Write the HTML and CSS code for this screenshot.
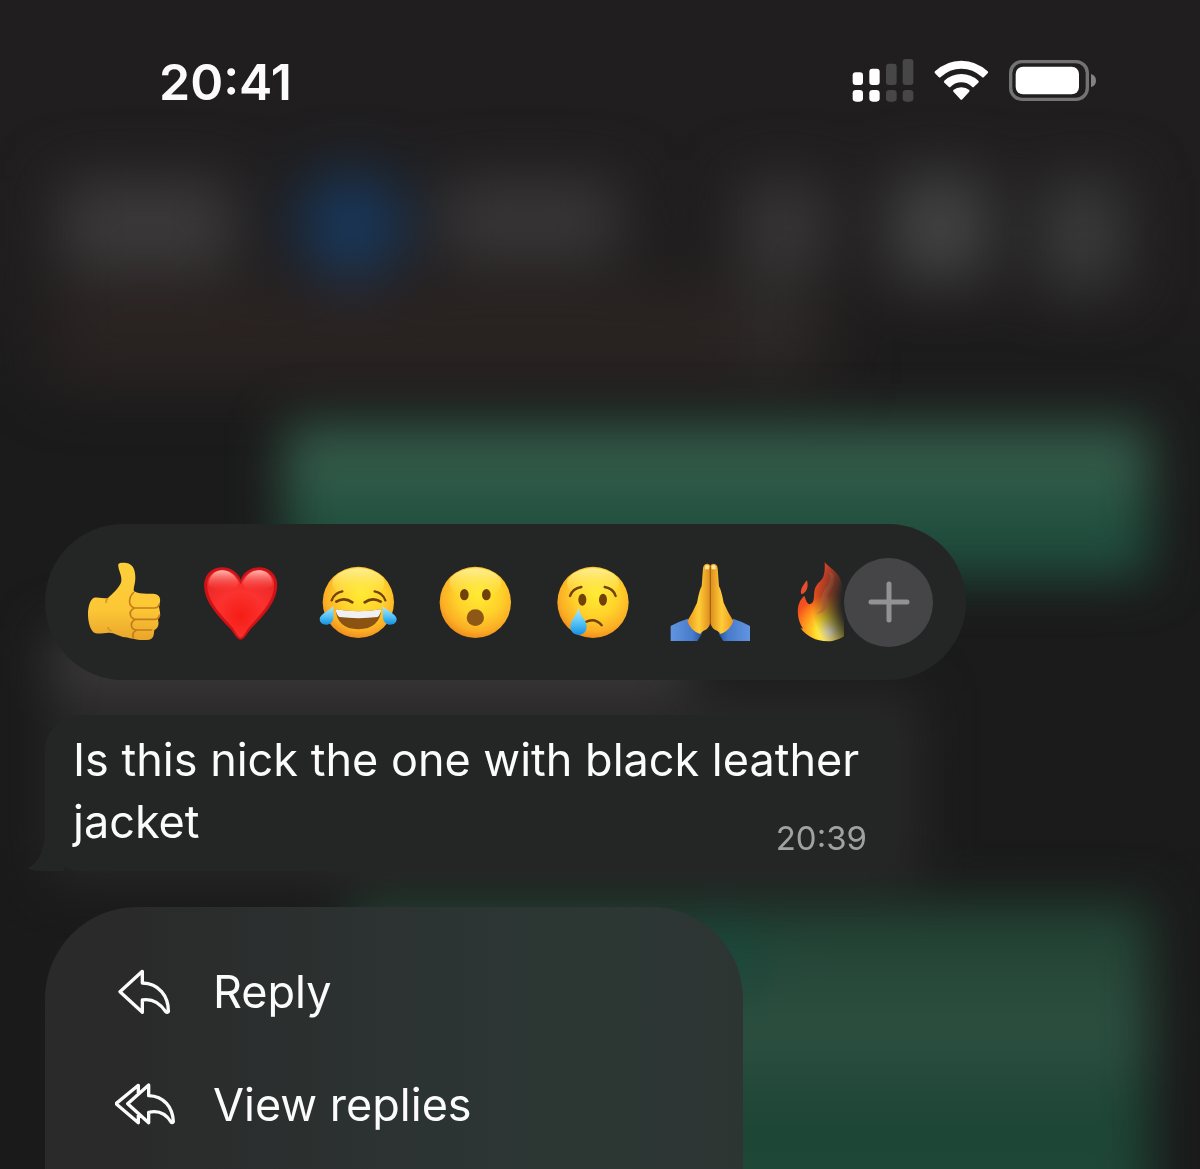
FILE: index.html
```html
<!DOCTYPE html>
<html lang="en">
<head>
<meta charset="utf-8">
<meta name="viewport" content="width=device-width, initial-scale=1">
<title>Message actions</title>
<link rel="stylesheet" href="styles.css">
</head>
<body>
<svg class="backdrop" viewBox="0 0 1200 1169" preserveAspectRatio="none" aria-hidden="true">
  <defs>
    <filter id="soft" x="-20%" y="-50%" width="140%" height="200%" color-interpolation-filters="sRGB"><feGaussianBlur stdDeviation="30"/></filter>
    <filter id="tight" x="-20%" y="-50%" width="140%" height="200%" color-interpolation-filters="sRGB"><feGaussianBlur stdDeviation="25"/></filter>
    <linearGradient id="sent1" x1="0" y1="0" x2="0" y2="1">
      <stop offset="0" stop-color="#2f5344"/><stop offset=".35" stop-color="#345d4b"/><stop offset=".6" stop-color="#214f3e"/><stop offset="1" stop-color="#1f4d3f"/>
    </linearGradient>
    <linearGradient id="sent2" x1="0" y1="0" x2="0" y2="1">
      <stop offset="0" stop-color="#203f31"/><stop offset=".4" stop-color="#2d5041"/><stop offset=".65" stop-color="#1d4536"/><stop offset="1" stop-color="#214a3a"/>
    </linearGradient>
    <linearGradient id="base" x1="0" y1="0" x2="0" y2="1">
      <stop offset="0" stop-color="#201e1f"/><stop offset=".25" stop-color="#1f1d1e"/><stop offset=".36" stop-color="#1b1b1b"/><stop offset="1" stop-color="#1a1a1a"/>
    </linearGradient>
  </defs>
  <rect width="1200" height="1169" fill="url(#base)"/>
  <g filter="url(#soft)">
    <rect x="50" y="280" width="780" height="105" fill="#2a2322"/>
    <rect x="740" y="230" width="65" height="140" fill="#2c2a29"/>
    <rect x="60" y="180" width="175" height="90" fill="#3c3a3b"/>
    <rect x="440" y="180" width="180" height="80" fill="#393738"/>
    <rect x="740" y="180" width="90" height="90" fill="#383637"/>
    <rect x="890" y="175" width="100" height="105" fill="#434343"/>
    <rect x="1040" y="180" width="85" height="110" fill="#3b3b3b"/>
    <circle cx="352" cy="225" r="54" fill="#18385c"/>
  </g>
  <g filter="url(#tight)">
    <rect x="284" y="422" width="866" height="156" fill="url(#sent1)"/>
    <rect x="50" y="630" width="640" height="80" fill="#3b393a"/>
    <rect x="50" y="690" width="870" height="190" fill="#292828"/>
    <rect x="350" y="902" width="800" height="330" fill="url(#sent2)"/>
    <ellipse cx="720" cy="960" rx="50" ry="40" fill="#1c473b"/>
  </g>
</svg>

<div class="screen">
  <header class="status">
    <time class="clock">20:41</time>
    <div class="indicators">
      <svg width="62" height="44" viewBox="36 54 186 132" role="img" aria-label="Signal">
        <g fill="#fff"><rect x="38" y="97" width="31" height="38" rx="9"/><rect x="88" y="86" width="31" height="49" rx="9"/><rect x="38" y="150" width="31" height="35" rx="10"/><rect x="88" y="150" width="31" height="35" rx="10"/></g>
        <g fill="#484748"><rect x="138" y="71" width="32" height="64" rx="9"/><rect x="188" y="57" width="32" height="78" rx="9"/><rect x="138" y="150" width="32" height="35" rx="10"/><rect x="188" y="150" width="32" height="35" rx="10"/></g>
      </svg>
      <svg width="55" height="44" viewBox="282 54 165 132" role="img" aria-label="Wi-Fi">
        <g fill="#fff"><path d="M285 94Q319 62 364 62Q409 62 443 94Q446 97 443 100L432 111Q429 114 426 111Q399 86 364 86Q329 86 302 111Q299 114 296 111L285 100Q282 97 285 94Z"/><path d="M313 122Q335 102 364 102Q393 102 415 122Q418 125 415 128L402 140Q399 143 396 140Q382 127 364 127Q346 127 332 140Q329 143 326 140L313 128Q310 125 313 122Z"/><path d="M340 150Q350 142 364 142Q378 142 388 150Q390 153 387 156L367 178Q364 181 361 178L341 156Q338 153 340 150Z"/></g>
      </svg>
      <svg width="88" height="44" viewBox="507 54 264 132" role="img" aria-label="Battery">
        <rect x="512" y="65" width="230" height="113" rx="34" fill="none" stroke="#747374" stroke-width="10"/>
        <rect x="527" y="80" width="190" height="83" rx="22" fill="#fff"/><path d="M753 102Q768 107 768 122Q768 137 753 141Z" fill="#848384"/>
      </svg>
    </div>
  </header>

  <main class="focus">
    <section class="reactions" aria-label="Reactions">
      <div class="strip">
        <button class="reaction" type="button" aria-label="Thumbs up">
          <svg viewBox="35 30 252 252">
            <defs><linearGradient id="hand" x1="0" y1="0" x2="0" y2="1"><stop offset="0" stop-color="#ffd03a"/><stop offset=".6" stop-color="#fcc736"/><stop offset="1" stop-color="#e9a52b"/></linearGradient></defs>
            <path d="M144 47C141 37 158 37 168 39C188 42 195 60 195 83C195 103 188 113 191 124C206 132 222 132 247 131C266 131 273 144 268 160C264 168 267 175 269 187C271 200 264 204 263 209C267 225 263 234 252 240C250 254 252 269 229 270C198 272 182 264 165 262C145 259 131 247 115 248C102 248 90 252 76 250C61 246 53 218 53 193C53 166 61 147 71 143C84 141 96 145 112 145C128 130 152 108 153 93C155 76 144 60 144 47Z" fill="url(#hand)"/>
            <path d="M191 126Q176 140 178 158Q180 170 192 174Q174 184 182 200Q186 207 195 208Q178 218 185 233Q190 240 199 240Q182 248 190 264M190 174H252Q264 174 267 162M192 208H255Q266 206 268 194M196 240H246" fill="none" stroke="#c47d18" stroke-width="5"/>
            <path d="M112 145Q105 152 108 159M124 243Q113 240 113 231" fill="none" stroke="#d8962a" stroke-width="5"/>
          </svg>
        </button>
        <button class="reaction" type="button" aria-label="Heart">
          <svg viewBox="385 30 252 252">
            <defs><radialGradient id="heart" cx=".5" cy=".68" r=".6"><stop offset="0" stop-color="#f51d15"/><stop offset=".6" stop-color="#fb322f"/><stop offset="1" stop-color="#ee2a29"/></radialGradient>
            <linearGradient id="gloss" x1="0" y1="0" x2="0" y2="1"><stop offset="0" stop-color="#ffb9b2"/><stop offset="1" stop-color="#ff4a46" stop-opacity="0"/></linearGradient></defs>
            <path d="M510 89C529 40 603 38 618 91C629 150 573 202 541 236C531 247 521 268 510 269C498 268 489 247 479 236C447 202 391 150 402 91C417 38 491 40 510 89Z" fill="#d01216"/>
            <path d="M510 103C529 48 594 46 609 91C619 148 566 197 536 230C526 242 519 261 510 263C500 261 494 242 484 230C454 197 401 148 411 91C426 46 491 48 510 103Z" fill="url(#heart)"/>
            <path d="M413 105C416 47 485 47 504 99Q500 120 460 122Q430 123 413 105ZM607 105C604 47 535 47 516 99Q520 120 560 122Q590 123 607 105Z" fill="url(#gloss)"/>
          </svg>
        </button>
        <button class="reaction" type="button" aria-label="Tears of joy">
          <svg viewBox="46 30 252 252">
            <defs>
              <radialGradient id="face" cx=".55" cy=".38" r=".64"><stop offset="0" stop-color="#ffec32"/><stop offset=".5" stop-color="#ffd12a"/><stop offset=".82" stop-color="#fbae25"/><stop offset="1" stop-color="#ee8a1c"/></radialGradient>
              <linearGradient id="shine" x1="0" y1="0" x2="0" y2="1"><stop offset="0" stop-color="#fff2a0" stop-opacity=".9"/><stop offset="1" stop-color="#ffe93b" stop-opacity="0"/></linearGradient>
              <linearGradient id="tear" x1="0" y1="0" x2="0" y2="1"><stop offset="0" stop-color="#b5ecff"/><stop offset=".55" stop-color="#55c5f8"/><stop offset="1" stop-color="#1690df"/></linearGradient>
            </defs>
            <circle cx="173" cy="157" r="107" fill="url(#face)"/><ellipse cx="173" cy="100" rx="78" ry="45" fill="url(#shine)"/>
            <g fill="none" stroke="#70410a" stroke-linecap="round" stroke-width="8"><path d="M93 151Q101 128 125 124M254 151Q246 128 222 124" stroke-width="7"/><path d="M107 155Q131 140 155 157M192 157Q216 140 240 155"/></g>
            <path d="M105 178Q173 190 242 178Q237 237 173 238Q109 237 105 178Z" fill="#8a5312"/>
            <path d="M105 178Q173 190 242 178Q239 195 231 201Q173 208 116 201Q107 195 105 178Z" fill="#f0f0f2"/>
            <path d="M98 167C90 181 57 191 57 207C57 230 96 231 98 203ZM246 167C254 181 288 191 288 207C288 230 249 231 247 203Z" fill="url(#tear)"/>
          </svg>
        </button>
        <button class="reaction" type="button" aria-label="Surprised">
          <svg viewBox="397 30 252 252">
            <circle cx="524" cy="157" r="107" fill="url(#face)"/><ellipse cx="524" cy="100" rx="78" ry="45" fill="url(#shine)"/>
            <g fill="#70410a"><ellipse cx="491" cy="134" rx="13" ry="17"/><ellipse cx="557" cy="134" rx="13" ry="17"/></g><ellipse cx="524" cy="203" rx="26" ry="25" fill="#8e5716"/>
          </svg>
        </button>
        <button class="reaction" type="button" aria-label="Crying">
          <svg viewBox="28 30 252 252">
            <circle cx="157" cy="157" r="107" fill="url(#face)"/><ellipse cx="157" cy="100" rx="78" ry="45" fill="url(#shine)"/>
            <g fill="#70410a"><ellipse cx="125" cy="149" rx="12" ry="18"/><ellipse cx="187" cy="149" rx="12" ry="18"/></g>
            <path d="M88 138Q96 115 122 111M225 138Q218 115 192 111M135 216Q163 202 183 226" fill="none" stroke="#70410a" stroke-linecap="round" stroke-width="7"/>
            <path d="M113 172C117 198 138 210 138 229C138 264 89 263 89 229C89 210 109 198 113 172Z" fill="url(#tear)"/>
          </svg>
        </button>
        <button class="reaction" type="button" aria-label="Folded hands">
          <svg viewBox="379 30 252 252">
            <defs><linearGradient id="sleeve" x1="0" y1="0" x2="1" y2="0"><stop offset="0" stop-color="#6295e0"/><stop offset=".7" stop-color="#477bcb"/><stop offset="1" stop-color="#26509a"/></linearGradient>
            <linearGradient id="palm" x1="0" y1="0" x2="1" y2="0"><stop offset="0" stop-color="#eb971e"/><stop offset=".5" stop-color="#ffcd39"/><stop offset="1" stop-color="#dc8a1b"/></linearGradient></defs>
            <g id="pray"><path d="M390 228Q415 214 441 206Q449 236 485 250L470 273H390Z" fill="url(#sleeve)"/>
            <path d="M487 55Q488 41 501 41Q510 43 510 53V205Q510 229 498 238Q484 243 478 252Q450 242 440 213Q456 188 469 158Q477 116 483 109Z" fill="url(#palm)"/><path d="M493 48Q500 42 506 48L505 58H493Z" fill="#ffe49a"/></g>
            <use href="#pray" transform="matrix(-1 0 0 1 1018 0)"/>
            <path d="M509 50V220" stroke="#9c5b10" stroke-width="3"/>
          </svg>
        </button>
        <button class="reaction" type="button" aria-label="Fire">
          <svg viewBox="40 120 252 252">
            <defs><radialGradient id="fire" gradientUnits="userSpaceOnUse" cx="178" cy="335" r="170"><stop offset="0" stop-color="#fff7df"/><stop offset=".25" stop-color="#ffe12a"/><stop offset=".5" stop-color="#ff8a1c"/><stop offset=".66" stop-color="#f4501f"/><stop offset="1" stop-color="#ef4528"/></radialGradient></defs>
            <path d="M162 127C177 145 211 158 215 200C222 225 231 239 244 252C260 280 256 350 185 363C141 367 108 350 89 323Q92 325 97 326C75 293 76 248 101 227C107 245 112 258 123 250C136 240 124 213 139 194C148 181 165 181 162 127Z" fill="url(#fire)"/>
            <path d="M109 181C114 200 109 218 92 223C87 210 96 196 109 181Z" fill="#e84e2c"/>
            <path d="M174 154Q188 181 163 207Q148 231 155 257Q152 276 134 279Q153 285 164 268Q173 247 170 224Q194 194 190 164Z" fill="#ff7a48" opacity=".6"/>
          </svg>
        </button>
      </div>
      <button class="more" type="button" aria-label="More reactions">
        <svg width="42" height="42" viewBox="0 0 42 42"><path d="M21 3V39M3 21H39" stroke="#929294" stroke-width="5" stroke-linecap="round"/></svg>
      </button>
    </section>

    <article class="bubble">
      <svg class="tail" width="36" height="60" viewBox="0 0 36 60" aria-hidden="true"><path d="M17 0V20Q17 48 0 57Q4 60 14 60H36V0Z"/></svg>
      <p class="text">Is this nick the one with black leather jacket</p>
      <time class="sent">20:39</time>
    </article>

    <nav class="menu" aria-label="Message actions">
      <button class="item" type="button">
        <svg class="icon" viewBox="45 56 180 138"><path d="M127 63L60 124L127 186V149C158 144 180 159 197 184Q201 188 205 184C206 137 176 99 127 98Z"/></svg>
        Reply
      </button>
      <button class="item" type="button">
        <svg class="icon" viewBox="45 395 180 138"><path d="M146 404L83 460L146 517V486C176 479 199 492 213 515Q217 519 220 514C218 470 192 438 146 436ZM115 432V405L48 460L115 517V490"/></svg>
        View replies
      </button>
    </nav>
  </main>
</div>
</body>
</html>
```
FILE: styles.css
```css
* {
  box-sizing: border-box;
}

body {
  margin: 0;
  background: #1b1b1b;
  color: #fbfbfb;
  font-family: Inter, "Liberation Sans", sans-serif;
}

button {
  margin: 0;
  padding: 0;
  border: 0;
  background: none;
  color: inherit;
  font: inherit;
  text-align: left;
}

svg {
  display: block;
}

/* Blurred conversation behind the focused message */
.backdrop {
  position: fixed;
  inset: 0;
  z-index: -1;
  width: 100%;
  height: 100%;
}

.screen {
  display: flex;
  flex-direction: column;
  min-height: 100vh;
}

.status {
  display: flex;
  align-items: flex-start;
  justify-content: space-between;
  padding: 58px 103px 0 159px;
}

.clock {
  font-size: 50px;
  font-weight: 600;
  line-height: 48px;
}

.indicators {
  display: flex;
  gap: 20px;
}

.focus {
  display: flex;
  flex: 1;
  flex-direction: column;
  align-items: flex-start;
  padding: 418px 45px 0;
}

.reactions {
  display: flex;
  align-items: center;
  width: 100%;
  max-width: 921px;
  height: 156px;
  padding: 0 33px 0 20px;
  border-radius: 78px;
  background: #242625;
}

.strip {
  display: flex;
  flex: 1;
  min-width: 0;
  overflow: hidden;
  -webkit-mask-image: radial-gradient(circle at calc(100% + 44px) 50%, transparent 46px, #000 76px);
  mask-image: radial-gradient(circle at calc(100% + 44px) 50%, transparent 46px, #000 76px);
}

.reaction {
  display: flex;
  flex: none;
  justify-content: center;
  width: 117px;
}

.reaction svg {
  width: 84px;
  height: 84px;
}

.more {
  display: grid;
  flex: none;
  place-items: center;
  width: 89px;
  height: 89px;
  border-radius: 50%;
  background: #454547;
}

/* Text and time share one cell; the time sits in its bottom right corner */
.bubble {
  position: relative;
  display: grid;
  width: 100%;
  max-width: 852px;
  margin-top: 35px;
  padding: 14px 30px 14px 28px;
  border-radius: 36px;
  background: #242625;
}

.tail {
  position: absolute;
  bottom: 0;
  left: -17px;
  fill: #242625;
}

.text {
  position: relative;
  grid-area: 1 / 1;
  margin: 0;
  padding-bottom: 4px;
  font-size: 45px;
  line-height: 62px;
}

.sent {
  position: relative;
  grid-area: 1 / 1;
  align-self: end;
  justify-self: end;
  color: #a0a1a1;
  font-size: 33px;
  line-height: 38px;
}

.menu {
  flex: 1;
  width: 100%;
  max-width: 698px;
  margin-top: 36px;
  padding: 28px 36px 0 70px;
  border-radius: 92px 92px 0 0;
  background: linear-gradient(90deg, #2a2a2a 12%, #2c3332 50%, #2c3734 75%, #2d3533);
}

.item {
  display: flex;
  align-items: center;
  gap: 38px;
  width: 100%;
  height: 113px;
  font-size: 45px;
}

.icon {
  width: 60px;
  height: 46px;
  fill: none;
  stroke: #fbfbfb;
  stroke-width: 10;
  stroke-linejoin: round;
  stroke-linecap: round;
}
```
